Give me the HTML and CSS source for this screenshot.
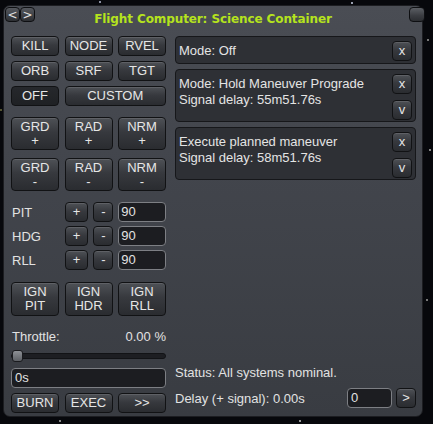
FILE: index.html
```html
<!DOCTYPE html>
<html>
<head>
<meta charset="utf-8">
<link rel="stylesheet" href="styles.css">
</head>
<body>
<div class="window">
  <div class="titlebar">
    <div class="nav">
      <button class="tbtn">&lt;</button><button class="tbtn">&gt;</button>
    </div>
    <div class="title">Flight Computer: Science Container</div>
    <button class="close"></button>
  </div>
  <div class="content">
    <div class="left">
      <div class="grid3">
        <button class="btn">KILL</button>
        <button class="btn">NODE</button>
        <button class="btn">RVEL</button>
        <button class="btn">ORB</button>
        <button class="btn">SRF</button>
        <button class="btn">TGT</button>
        <button class="btn active">OFF</button>
        <button class="btn span2">CUSTOM</button>
      </div>
      <div class="grid3 tall first-tall">
        <button class="btn two">GRD<br>+</button>
        <button class="btn two">RAD<br>+</button>
        <button class="btn two">NRM<br>+</button>
      </div>
      <div class="grid3 tall second-tall">
        <button class="btn two">GRD<br>-</button>
        <button class="btn two">RAD<br>-</button>
        <button class="btn two">NRM<br>-</button>
      </div>
      <div class="attitude">
        <div class="arow">
          <span class="alabel">PIT</span>
          <button class="btn plus">+</button>
          <button class="btn minus">-</button>
          <div class="field small">90</div>
        </div>
        <div class="arow">
          <span class="alabel">HDG</span>
          <button class="btn plus">+</button>
          <button class="btn minus">-</button>
          <div class="field small">90</div>
        </div>
        <div class="arow">
          <span class="alabel">RLL</span>
          <button class="btn plus">+</button>
          <button class="btn minus">-</button>
          <div class="field small">90</div>
        </div>
      </div>
      <div class="grid3 ign">
        <button class="btn two">IGN<br>PIT</button>
        <button class="btn two">IGN<br>HDR</button>
        <button class="btn two">IGN<br>RLL</button>
      </div>
      <div class="throttle">
        <span>Throttle:</span>
        <span>0.00 %</span>
      </div>
      <div class="slider"><div class="track"></div><div class="thumb"></div></div>
      <div class="field wide">0s</div>
      <div class="grid3 burn">
        <button class="btn">BURN</button>
        <button class="btn">EXEC</button>
        <button class="btn">&gt;&gt;</button>
      </div>
    </div>
    <div class="right">
      <div class="box single">
        <div class="btext">Mode: Off</div>
        <div class="bbtns"><button class="btn sq">x</button></div>
      </div>
      <div class="box">
        <div class="btext">Mode: Hold Maneuver Prograde<br>Signal delay: 55m51.76s</div>
        <div class="bbtns"><button class="btn sq">x</button><button class="btn sq">v</button></div>
      </div>
      <div class="box">
        <div class="btext">Execute planned maneuver<br>Signal delay: 58m51.76s</div>
        <div class="bbtns"><button class="btn sq">x</button><button class="btn sq">v</button></div>
      </div>
      <div class="status">Status: All systems nominal.</div>
      <div class="delay">
        <span class="dlabel">Delay (+ signal): 0.00s</span>
        <div class="field dfield">0</div>
        <button class="btn sq">&gt;</button>
      </div>
    </div>
  </div>
</div>
</body>
</html>
```
FILE: styles.css
```css
html, body {
  margin: 0;
  padding: 0;
}
body {
  width: 433px;
  height: 424px;
  overflow: hidden;
  background-color: #07080c;
  background-image:
    radial-gradient(circle at 100px 2px, #8a8fa0 0.8px, transparent 1.2px),
    radial-gradient(circle at 352px 3px, #9aa0b0 0.8px, transparent 1.2px),
    radial-gradient(circle at 428px 40px, #777 0.8px, transparent 1.2px),
    radial-gradient(circle at 430px 150px, #888 0.8px, transparent 1.2px),
    radial-gradient(circle at 427px 300px, #777 0.8px, transparent 1.2px),
    radial-gradient(circle at 60px 421px, #888 0.8px, transparent 1.2px),
    radial-gradient(circle at 300px 421px, #999 0.8px, transparent 1.2px),
    radial-gradient(circle at 1px 110px, #553 0.8px, transparent 1.2px);
  font-family: "Liberation Sans", Arial, sans-serif;
  font-size: 13px;
  color: #e2e2e2;
}
.window {
  box-sizing: border-box;
  margin: 5px 0 0 3px;
  width: 420px;
  height: 412px;
  border: 1px solid #1c1d21;
  border-radius: 7px;
  background: linear-gradient(#4a4d54, #42454c 40%, #393c42);
  display: flex;
  flex-direction: column;
}
.titlebar {
  height: 30px;
  display: grid;
  grid-template-columns: 1fr auto 1fr;
  align-items: start;
}
.nav {
  display: flex;
  margin: 1px 0 0 1px;
  justify-self: start;
}
.tbtn {
  box-sizing: border-box;
  width: 15px;
  height: 15px;
  border: 1px solid #0e0f12;
  border-radius: 4px;
  background: linear-gradient(#55585e, #2d2f33);
  color: #e0e0e0;
  font: 12px "DejaVu Sans", sans-serif;
  line-height: 12px;
  padding: 0;
  margin: 0;
}
.title {
  margin-top: 6px;
  color: #b5e31d;
  font: bold 12px "DejaVu Sans", sans-serif;
  letter-spacing: -0.1px;
  text-align: center;
  white-space: nowrap;
}
.close {
  justify-self: end;
  box-sizing: border-box;
  width: 16px;
  height: 15px;
  margin: 1px -3px 0 0;
  border: 1px solid #0e0f12;
  border-radius: 4px;
  background: linear-gradient(#5b5e64, #3a3c41 60%, #2c2e32);
  padding: 0;
}
.content {
  display: flex;
  gap: 9px;
  padding: 0 6px 0 7px;
  flex: 1;
}
.left {
  width: 155px;
  display: flex;
  flex-direction: column;
}
.right {
  width: 241px;
  display: flex;
  flex-direction: column;
  gap: 5px;
}
.btn {
  box-sizing: border-box;
  height: 20px;
  border: 1px solid #111214;
  border-radius: 4px;
  background: linear-gradient(#4e5156, #37393e 45%, #2a2c30);
  box-shadow: inset 0 1px 0 rgba(255,255,255,0.10);
  color: #e6e6e6;
  font: 13px "Liberation Sans", Arial, sans-serif;
  line-height: 14px;
  padding: 0;
  margin: 0;
  display: flex;
  align-items: center;
  justify-content: center;
}
.btn.active {
  background: linear-gradient(#26282c, #1f2124);
  box-shadow: none;
}
.grid3 {
  display: grid;
  grid-template-columns: 48px 48px 48px;
  column-gap: 5.5px;
  row-gap: 5px;
}
.span2 {
  grid-column: span 2;
}
.two {
  height: 33px;
}
.first-tall {
  margin-top: 11px;
}
.second-tall {
  margin-top: 8px;
}
.attitude {
  margin-top: 11px;
  display: flex;
  flex-direction: column;
  gap: 4px;
}
.arow {
  display: flex;
  align-items: center;
  height: 20px;
}
.alabel {
  width: 53px;
  padding-left: 1px;
}
.plus {
  width: 24px;
}
.minus {
  width: 20px;
  margin-left: 5px;
}
.field {
  box-sizing: border-box;
  height: 20px;
  border: 1px solid #7d7f84;
  border-radius: 4px;
  background: #1c1d21;
  color: #e2e2e2;
  padding-left: 2px;
  line-height: 18px;
}
.small {
  width: 48px;
  margin-left: 5px;
}
.ign {
  margin-top: 12px;
}
.ign .two {
  height: 34px;
}
.throttle {
  margin-top: 13px;
  height: 16px;
  line-height: 16px;
  display: flex;
  justify-content: space-between;
  padding-left: 1px;
}
.slider {
  position: relative;
  margin-top: 5px;
  height: 12px;
}
.track {
  position: absolute;
  left: 0;
  right: 0;
  top: 3px;
  height: 6px;
  box-sizing: border-box;
  border: 1px solid #121316;
  border-radius: 3px;
  background: #1d1e22;
}
.thumb {
  position: absolute;
  left: 1px;
  top: 0;
  width: 11px;
  height: 12px;
  box-sizing: border-box;
  border: 1px solid #1a1b1e;
  border-radius: 3px;
  background: linear-gradient(#8e9196, #5c5f64);
}
.wide {
  margin-top: 6px;
  width: 155px;
  padding-left: 3px;
}
.burn {
  margin-top: 5px;
}
.box {
  box-sizing: border-box;
  height: 53px;
  border: 1px solid #16171a;
  border-radius: 4px;
  background: #2e3035;
  display: flex;
  justify-content: space-between;
  padding: 3px 3px 0 3px;
}
.box.single {
  height: 28px;
}
.btext {
  padding-top: 3px;
  line-height: 16px;
  color: #e4e4e4;
}
.bbtns {
  display: flex;
  flex-direction: column;
  gap: 6px;
  padding-top: 1px;
}
.sq {
  width: 20px;
  height: 20px;
}
.status {
  margin-top: auto;
  line-height: 16px;
}
.delay {
  margin-top: 2px;
  margin-bottom: 8px;
  display: flex;
  align-items: center;
  height: 20px;
}
.dlabel {
  flex: 1;
}
.dfield {
  width: 45px;
  margin-right: 4px;
  padding-left: 3px;
}
```
